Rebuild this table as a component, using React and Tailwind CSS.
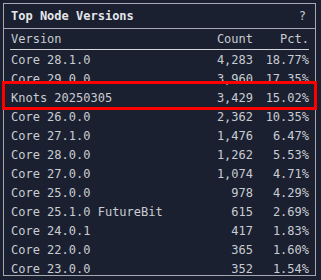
import React from "react";

const rows = [
  ["Core 28.1.0", "4,283", "18.77%"],
  ["Core 29.0.0", "3,960", "17.35%"],
  ["Knots 20250305", "3,429", "15.02%"],
  ["Core 26.0.0", "2,362", "10.35%"],
  ["Core 27.1.0", "1,476", "6.47%"],
  ["Core 28.0.0", "1,262", "5.53%"],
  ["Core 27.0.0", "1,074", "4.71%"],
  ["Core 25.0.0", "978", "4.29%"],
  ["Core 25.1.0 FutureBit", "615", "2.69%"],
  ["Core 24.0.1", "417", "1.83%"],
  ["Core 22.0.0", "365", "1.60%"],
  ["Core 23.0.0", "352", "1.54%"],
];

const App = () => {
  return (
    <div className="relative w-[321px] h-[280px] bg-[#1b2030] pt-[3px] pl-[3px] font-['DejaVu_Sans_Mono',monospace] text-[12px] text-[#c9ccd2] overflow-hidden">
      <div className="w-[313px] h-[273px] border border-[#a4a8b0] overflow-hidden flex flex-col">
        {/* title bar */}
        <div className="h-[25px] shrink-0 border-b border-[#a4a8b0] flex items-center justify-between pl-[7px] pr-[9px]">
          <span className="font-bold text-[#e4e6ea]">Top Node Versions</span>
          <span>?</span>
        </div>
        <div className="px-[6px]">
          <div className="h-[21px] grid grid-cols-[1fr_70px_56px] items-center border-b border-[#d4d6da]">
            <span className="pl-px">Version</span>
            <span className="text-right">Count</span>
            <span className="text-right">Pct.</span>
          </div>
          {rows.map((item, index) => (
            <div
              key={index}
              className="h-[19px] grid grid-cols-[1fr_70px_56px] items-center"
            >
              <span className="pl-px whitespace-pre">{item[0]}</span>
              <span className="text-right">{item[1]}</span>
              <span className="text-right">{item[2]}</span>
            </div>
          ))}
        </div>
      </div>
      {/* highlight */}
      <div className="absolute left-[2px] top-[81px] w-[315px] h-[29px] border-[3px] border-[#ff0000]"></div>
    </div>
  );
};

export default App;
